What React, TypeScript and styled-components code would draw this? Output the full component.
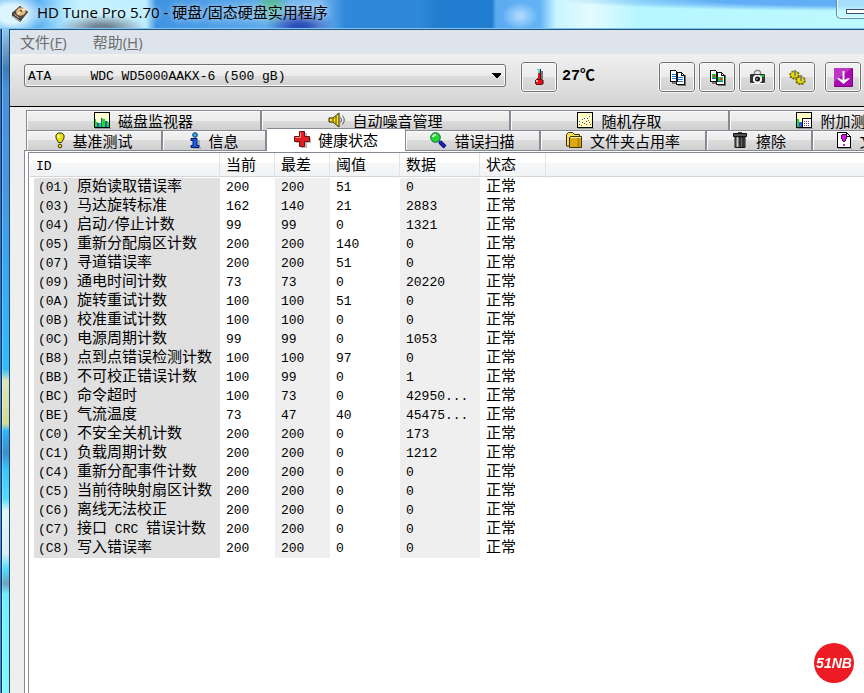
import React from "react";
import styled, { createGlobalStyle, css } from "styled-components";

const CJK = '"Noto Sans CJK SC", sans-serif';
const MONO = '"Liberation Mono", "Noto Sans CJK SC", monospace';

const GlobalStyle = createGlobalStyle`
  * { box-sizing: border-box; }
  html, body { margin: 0; height: 100%; overflow: hidden; background: #fff; }
  button { font: inherit; color: inherit; }
`;

/* ---------- window frame ---------- */

const Window = styled.div`
  display: flex;
  flex-direction: column;
  min-height: 100vh;
  overflow: hidden;
  color: #000;
  font: 13px/19px ${MONO};
`;

const TitleBar = styled.header`
  display: flex;
  align-items: center;
  height: 29px;
  padding-left: 11px;
  border-bottom: 1px solid #7fc4f0;
  background:
    radial-gradient(ellipse 34px 22px at 12px 14px, #e6fbffee 40%, #e6fbff00 100%),
    radial-gradient(ellipse 44px 14px at 102px 28px, #5d6878cc 20%, #5d687800 100%),
    radial-gradient(ellipse 18px 22px at 272px 4px, #4fb98bcc 20%, #4fb98b00 100%),
    radial-gradient(ellipse 34px 20px at 300px 26px, #1733a8cc 20%, #1733a800 100%),
    radial-gradient(ellipse 18px 14px at 520px 16px, #b9e0ffdd 10%, #b9e0ff00 100%),
    radial-gradient(ellipse 300px 11px at 860px 0, #62aef6 50%, #62aef600 100%),
    linear-gradient(90deg, #55abf2 0, #55abf2 36px, #a9e4fd 64px, #c6f2ff 80px, #bdeeff 146px, #3f93e2 156px,
      #5aa8ea 250px, #7dbcf0 318px, #2f88da 345px, #2f88da 418px, #217dcf 440px, #217dcf 492px,
      #5aaaf0 496px, #64b3f5 540px, #c9f5ff 556px, #e3fbff 590px, #b6f6ff 640px, #bdfaff 100%);
`;

const Title = styled.h1`
  flex: 1;
  margin: 0 0 4px 8px;
  font: 400 15px/22px "Open Sans", ${CJK};
  white-space: pre;
  text-shadow: 0 0 6px #ffffff99, 0 0 10px #ffffff66;
`;

const MinimizeButton = styled.button`
  align-self: flex-start;
  display: flex;
  align-items: center;
  justify-content: flex-end;
  width: 28px;
  height: 19px;
  padding: 5px 0 0;
  border: 1px solid #5c93ab;
  border-width: 0 0 1px 1px;
  border-radius: 0 0 0 5px;
  background: #c9f6ffaa;
  box-shadow: inset 1px -1px 0 #e9fdff;
`;

const Body = styled.div`
  flex: 1;
  display: flex;
`;

const LeftFrame = styled.div`
  flex: 0 0 10px;
  border-right: 1px solid #1c4468;
  background:
    linear-gradient(90deg, #0a63c8aa 1px, #0b2f55 1px, #0b2f55 2px, #ffffff55 2px, #ffffff55 3px, transparent 3px),
    linear-gradient(180deg, #8cc9f5 0, #6f9fc8 20px, #3f7db8 40px, #4a90d9 60px, #4796df 160px, #3aa5ef 230px, #2fbdfb 340px,
      #dfe6ba 352px, #d5da96 395px, #2fb4f8 402px, #3c8fc4 424px, #38c6fb 440px, #55dcff 470px,
      #e2f7ff 482px, #d8ecfb 525px, #4fdcff 540px, #6aa4bd 555px, #6ff0ff 565px, #86f8ff 100%);
`;

const Client = styled.main`
  flex: 1;
  min-width: 0;
  display: flex;
  flex-direction: column;
  border-top: 1px solid #23567f;
  background: #efefef;
`;

/* ---------- menu and toolbar ---------- */

const MenuBar = styled.nav`
  display: flex;
  gap: 26px;
  height: 24px;
  padding-left: 10px;
  background: #dde4ec;
`;

const MenuButton = styled.button`
  padding: 0;
  border: 0;
  background: none;
  color: #6d6d6d;
  font: 15px/24px "Open Sans", ${CJK};
`;

const Toolbar = styled.div`
  display: flex;
  align-items: flex-start;
  height: 53px;
  padding: 8px 3px 0 14px;
  border-bottom: 1px solid #000;
  background: linear-gradient(#f1f1f1, #d3d3d3);
`;

const DriveField = styled.label`
  display: grid;
  align-items: center;
  flex: 0 1 482px;
  min-width: 120px;
  margin-top: 2px;
  & > * { grid-area: 1 / 1; }
  & > svg { justify-self: end; margin-right: 5px; pointer-events: none; }
`;

const DriveSelect = styled.select`
  appearance: none;
  width: 100%;
  height: 23px;
  padding: 1px 20px 0 3px;
  border: 1px solid #707070;
  border-radius: 3px;
  background: linear-gradient(#f3f3f3, #ebebeb 50%, #dddddd 50%, #d0d0d0);
  box-shadow: inset 0 0 0 1px #fafafa;
  color: #000;
  font: 13px/19px ${MONO};
`;

const ToolButton = styled.button`
  display: flex;
  align-items: center;
  justify-content: center;
  flex: none;
  width: 36px;
  height: 30px;
  padding: 0;
  border: 1px solid #707070;
  border-radius: 3px;
  outline: 1px solid #f3f3f3;
  background: linear-gradient(#f3f3f3, #ebebeb 50%, #dddddd 50%, #cfcfcf);
  box-shadow: inset 0 0 0 1px #fafafa;
`;

const Temperature = styled.output`
  margin-left: 5px;
  font: 700 15px/30px "Liberation Mono", ${CJK};
`;

const ToolGroup = styled.div`
  display: flex;
  gap: 4px;
  margin-left: auto;
  & > :last-child { margin-left: 6px; }
`;

const ThermoButton = styled(ToolButton)`
  margin-left: 15px;
`;

/* ---------- tabs ---------- */

const TabArea = styled.div`
  flex: 1;
  display: flex;
  flex-direction: column;
  padding: 3px 0 0 14px;
  overflow: hidden;
`;

const TabRow = styled.div`
  display: flex;
  height: 20px;
  margin-left: 2px;
  border-left: 1px solid #858a95;
`;

const Tab = styled.button<{ $width: number; $active?: boolean }>`
  display: flex;
  align-items: center;
  justify-content: center;
  gap: 7px;
  flex: 0 0 ${(p) => p.$width}px;
  height: 20px;
  padding: 0;
  border: 0 solid #858a95;
  border-width: 1px 2px 0 0;
  background: linear-gradient(#f2f2f2, #ebebeb 50%, #dcdcdc 50%, #cfcfcf);
  box-shadow: inset 1px 1px 0 #fbfbfb;
  color: #000;
  font: 15px/18px ${CJK};
  white-space: nowrap;
  & > svg { flex: none; }
  ${(p) =>
    p.$active &&
    css`
      z-index: 1;
      height: 23px;
      margin-top: -2px;
      padding: 0 0 1px;
      border-right-width: 1px;
      background: #fff;
      box-shadow: none;
    `}
`;

const Panel = styled.section`
  flex: 1;
  display: flex;
  padding: 1px 0 0 3px;
  border: solid #858a95;
  border-width: 1px 0 0 1px;
  background: #fff;
`;

const ListView = styled.div`
  flex: 1;
  min-width: 0;
  padding-left: 1px;
  border: solid #858a95;
  border-width: 1px 0 0 1px;
`;

/* ---------- attribute table ---------- */

const Table = styled.table`
  width: 100%;
  border-spacing: 0;
  table-layout: fixed;
`;

const Col = styled.col<{ $width?: number }>`
  width: ${(p) => (p.$width ? `${p.$width}px` : "auto")};
`;

const HeadCell = styled.th`
  height: 25px;
  padding: 2px 0 0 6px;
  border-right: 1px solid #e2e4e8;
  background:
    linear-gradient(transparent 23px, #d5d5d5 23px, #d5d5d5 24px, #fff 24px),
    linear-gradient(#fff 10px, #f6f7f8 10px, #f1f2f4);
  font-weight: 400;
  text-align: left;
  white-space: nowrap;
  &:last-child { border-right: 0; }
`;

const Cell = styled.td<{ $tone?: string }>`
  height: 19px;
  padding: 0 0 0 6px;
  background: ${(p) => p.$tone || "#fff"};
  white-space: nowrap;
`;

const NameCell = styled(Cell)`
  padding-left: 4px;
  border-left: 4px solid #fff;
`;

const Han = styled.span`
  font-family: ${CJK};
  font-size: 15px;
  line-height: 0;
`;

const Badge = styled.div`
  position: fixed;
  right: 10px;
  bottom: 10px;
  display: flex;
  align-items: center;
  justify-content: center;
  width: 40px;
  height: 40px;
  border-radius: 50%;
  background: #ed1c24;
  color: #fff;
  font: italic 700 14px/40px "Liberation Sans", sans-serif;
`;

/* Chinese runs are set larger than the Latin text around them. */
function Mixed({ text }: { text: string }) {
  return (
    <>
      {text.split(/([\u4e00-\u9fff℃]+)/).map((part, i) => (i % 2 ? <Han key={i}>{part}</Han> : part))}
    </>
  );
}

/* ---------- icons ---------- */

function Svg({ w = 17, h = 17, smooth, children }: { w?: number; h?: number; smooth?: boolean; children: React.ReactNode }) {
  return (
    <svg width={w} height={h} viewBox={`0 0 ${w} ${h}`} shapeRendering={smooth ? "auto" : "crispEdges"} aria-hidden="true">
      {children}
    </svg>
  );
}

const DiskIcon = () => (
  <Svg w={18} h={18} smooth>
    <path d="M1 8 9 1l8 6-8 10-8-6z" fill="#3b3430" />
    <path d="M1 8 9 1l8 6-7 8z" fill="#55493f" />
    <ellipse cx="10" cy="6.500" rx="5" ry="4" fill="#e8b878" transform="rotate(-20 10 6.500)" />
    <path d="M10 6 14 4M10 6 7 9" stroke="#fff4dc" strokeWidth="1.500" />
    <circle cx="10" cy="6" r="1.300" fill="#7a6a55" />
    <path d="m3 9 5 4M2 11l7 5" stroke="#b9b9b9" />
  </Svg>
);

const ThermoIcon = () => (
  <Svg w={12} h={18}>
    <path d="M8 3h2v9l1 1v3l-2 1H4v-1h4z" fill="#777" />
    <path d="M4 1h4v10h1v1h1v4H9v1H3v-1H2v-4h1v-1h1z" fill="#7c1018" />
    <path d="M4 1h3v5H4z" fill="#58d4e0" />
    <path d="M5 5h2v6H5zM3 12h6v4H3z" fill="#f00c14" />
    <path d="M4 2h1v8H4z" fill="#d8ffff" />
    <path d="M3 12h2v2H3z" fill="#ffb4b4" />
    <path d="M1 12h1v4H1z" fill="#8ff" />
    <path d="M7 1h1v10H7z" fill="#401418" />
  </Svg>
);

const Pages = ({ picture }: { picture?: boolean }) => (
  <Svg>
    <path d="M3 13h5v2H3zM9 15h8v2H9zM15 6h2v10h-2z" fill="#777" />
    <path d="M1.500 1.500h5l2 2v9h-7zM7.500 3.500h5l3 3v9h-8z" fill="#fff" stroke="#111" />
    <path d="M12.500 3.500v3h3" fill="none" stroke="#111" />
    {picture ? (
      <>
        <path d="M3 5h4v5H3zM9 8h5v5H9z" fill="#16d235" />
        <path d="M3 9h4v1H3zM9 12h5v1H9z" fill="#1264d8" />
        <path d="M4 6h2v2H4zM11 9h2v2h-2z" fill="#f03818" />
      </>
    ) : (
      <path d="M3 5.500h4M3 7.500h4M3 9.500h4M9 8.500h5M9 10.500h5M9 12.500h5" stroke="#1d79dc" />
    )}
  </Svg>
);

const CameraIcon = () => (
  <Svg smooth>
    <path d="M5.500 5V3L7 1.500h3L11.500 3v2" fill="none" stroke="#888" strokeWidth="1.500" />
    <path d="M2 14.500h14" stroke="#fff" />
    <rect x="1" y="5" width="15" height="9" rx="1" fill="#333" />
    <rect x="12" y="6" width="3" height="2" fill="#19c832" />
    <path d="M6 6h5l2 2v4l-2 2H6l-2-2V8z" fill="#f4f4f4" />
    <circle cx="8.500" cy="10" r="2.500" fill="#111" />
    <path d="M7 9h2v2H7z" fill="#777" />
  </Svg>
);

const GearsIcon = () => (
  <Svg smooth>
    <g stroke="#6e6600" fill="#cfc600">
      <ellipse cx="5.500" cy="6" rx="4.200" ry="3.600" strokeDasharray="2 1" strokeWidth="2" />
      <ellipse cx="11.500" cy="11.500" rx="4.200" ry="3.600" strokeDasharray="2 1" strokeWidth="2" />
    </g>
    <ellipse cx="5.500" cy="5.500" rx="3.300" ry="2.600" fill="#e4dc10" />
    <ellipse cx="11.500" cy="11" rx="3.300" ry="2.600" fill="#e4dc10" />
    <path d="M6 1v6M12 6v6" stroke="#8a8a70" strokeWidth="2" />
  </Svg>
);

const DownIcon = () => (
  <Svg w={19} h={19} smooth>
    <rect width="19" height="19" rx="1" fill="#7d0085" />
    <rect width="18" height="18" rx="1" fill="#a80cae" />
    <path d="M0 0h18L0 14z" fill="#bf35c4" />
    <path d="M9.500 3v10" stroke="#fff" strokeWidth="2" />
    <path d="M3 10.500 5 10l3.500 2h2L14 10l2 .5-6.500 5.500z" fill="#fff" />
  </Svg>
);

const MonitorIcon = () => (
  <Svg>
    <path d="M1 16h16V1" fill="none" stroke="#999" />
    <path d="M.5.5h15v15H.5z" fill="#ffffd0" stroke="#000" />
    <path d="M1 7h1v3h2v1h3V6h2v1h2v2h3v1h1v5H1z" fill="#1ce01c" />
    <path d="M3 11h2v4H3zM7 6h1v9H7zM11 9h2v6h-2z" fill="#3652e0" />
  </Svg>
);

const SpeakerIcon = () => (
  <Svg smooth>
    <path d="M1 6h4l6-5v14l-6-5H1z" fill="#f6e61c" stroke="#2a2500" />
    <path d="M5 6v4M8 4v8" stroke="#8a7c00" strokeWidth="1.500" />
    <path d="M12.500 5.500q2 2.500 0 5M14.500 3.500q3.500 4.500 0 9" fill="none" stroke="#555" />
  </Svg>
);

const ScatterIcon = () => (
  <Svg>
    <path d="M1 16h16V1" fill="none" stroke="#999" />
    <path d="M.5.5h15v15H.5z" fill="#ffffc4" stroke="#000" />
    <path d="M2 9h1v1H2zM5 7h1v1H5zM7 6h1v1H7zM10 6h1v1h-1zM12 4h1v1h-1zM9 9h1v1H9zM5 10h1v1H5z" fill="#2440e0" />
    <path d="M2 12h1v1H2zM4 13h1v1H4zM7 11h1v1H7zM9 12h1v1H9zM12 10h1v1h-1zM11 8h1v1h-1zM13 12h1v1h-1z" fill="#e03020" />
  </Svg>
);

const ExtraIcon = () => (
  <Svg>
    <path d="M1 16h16V1" fill="none" stroke="#999" />
    <path d="M.5.5h15v15H.5z" fill="#ffffc4" stroke="#000" />
    <path d="M1 7h2v8H1z" fill="#18d830" />
    <path d="M3 10h3v5H3z" fill="#3652e0" />
    <path d="M6.500 6.500h9v9h-9z" fill="#fff" stroke="#000" />
    <path d="M8 9h1v1H8zM12 9h1v1h-1zM10 11h1v1h-1zM8 13h1v1H8z" fill="#d02090" />
    <path d="M10 9h1v1h-1zM8 11h1v1H8zM12 11h1v1h-1zM12 13h1v1h-1zM10 13h1v1h-1z" fill="#3040d0" />
  </Svg>
);

const BulbIcon = () => (
  <Svg w={10} smooth>
    <path d="M3 1h4l2 2v3L6.500 10.500h-3L1 6V3z" fill="#e8e010" stroke="#383400" />
    <path d="M3.500 3v3" stroke="#fffde0" strokeWidth="1.500" />
    <circle cx="5" cy="14" r="1.800" fill="#e8e010" stroke="#383400" />
  </Svg>
);

const InfoIcon = () => (
  <Svg w={12} smooth>
    <path d="M4 16h8M10 8v7" stroke="#888" />
    <circle cx="6" cy="3" r="2.300" fill="#28b8f4" stroke="#053060" />
    <path d="M2 6.500h6v7h2v2H2v-2h2v-5H2z" fill="#1463f0" stroke="#06165c" />
  </Svg>
);

const CrossIcon = () => (
  <Svg smooth>
    <path d="M7 2h6v5h4v5h-4v5H7v-5H2V7h5z" fill="#00000044" />
    <path d="M5.500.5h5v5h5v5h-5v5h-5v-5h-5v-5h5z" fill="#e21d24" stroke="#6b1116" />
    <path d="M6.500 1.500v5h-5" fill="none" stroke="#ff8a80" />
  </Svg>
);

const LensIcon = () => (
  <Svg smooth>
    <path d="m10 10 5 5" stroke="#000040" strokeWidth="4" />
    <path d="m9 9 6 6" stroke="#1424c8" strokeWidth="2.500" />
    <circle cx="5.500" cy="5.500" r="4.800" fill="#26d636" stroke="#0a6a30" />
    <path d="M3 5q0-2 3-2" fill="none" stroke="#c8ffd0" strokeWidth="2" />
  </Svg>
);

const FolderIcon = () => (
  <Svg smooth>
    <path d="M.5 14V2.500l2-2h4l2 2h5V14z" fill="#f4e060" stroke="#3a3000" />
    <path d="M3.500 15.500v-10l1-1h11v11z" fill="#dba914" stroke="#3a3000" />
    <path d="M5 5.500h10" stroke="#fff0a0" />
    <path d="M12.500 6v9" stroke="#b38300" strokeWidth="2" />
  </Svg>
);

const TrashIcon = () => (
  <Svg smooth>
    <path d="M6 0h4v2H6z" fill="#444" />
    <path d="M1.500 1.500h13v3h-13z" fill="#555" stroke="#111" />
    <path d="M3 5h10v10.500H3z" fill="#666" stroke="#111" />
    <path d="M5.500 5v10" stroke="#ccc" strokeWidth="1.500" />
    <path d="M8 5v10M11 5v10" stroke="#222" strokeWidth="1.500" />
  </Svg>
);

const FileTestIcon = () => (
  <Svg w={15}>
    <path d="M1 16h14V5" fill="none" stroke="#999" />
    <path d="M.5.5h9l4 4v11H.5z" fill="#fff" stroke="#000" />
    <path d="M9.500.5v4h4" fill="none" stroke="#000" />
    <path d="M5 2h4v1h1v4H9v2H8v1H6V9H5V7H4V3h1z" fill="#4a0050" />
    <path d="M5 3h4v4H8v2H6V7H5zM6 12h2v2H6z" fill="#d418dc" />
  </Svg>
);

/* ---------- data ---------- */

type TabInfo = { label: string; width: number; icon: React.ReactNode; active?: boolean };

const upperTabs: TabInfo[] = [
  { label: "磁盘监视器", width: 235, icon: <MonitorIcon /> },
  { label: "自动噪音管理", width: 249, icon: <SpeakerIcon /> },
  { label: "随机存取", width: 219, icon: <ScatterIcon /> },
  { label: "附加测试", width: 219, icon: <ExtraIcon /> },
];

const lowerTabs: TabInfo[] = [
  { label: "基准测试", width: 136, icon: <BulbIcon /> },
  { label: "信息", width: 104, icon: <InfoIcon /> },
  { label: "健康状态", width: 139, icon: <CrossIcon />, active: true },
  { label: "错误扫描", width: 135, icon: <LensIcon /> },
  { label: "文件夹占用率", width: 166, icon: <FolderIcon /> },
  { label: "擦除", width: 106, icon: <TrashIcon /> },
  { label: "文件基准", width: 133, icon: <FileTestIcon /> },
];

const columns: [string, number?][] = [["ID", 190], ["当前", 55], ["最差", 55], ["阈值", 70], ["数据", 80], ["状态", 66], [""]];

const attributes: string[][] = [
  ["(01) 原始读取错误率", "200", "200", "51", "0"],
  ["(03) 马达旋转标准", "162", "140", "21", "2883"],
  ["(04) 启动/停止计数", "99", "99", "0", "1321"],
  ["(05) 重新分配扇区计数", "200", "200", "140", "0"],
  ["(07) 寻道错误率", "200", "200", "51", "0"],
  ["(09) 通电时间计数", "73", "73", "0", "20220"],
  ["(0A) 旋转重试计数", "100", "100", "51", "0"],
  ["(0B) 校准重试计数", "100", "100", "0", "0"],
  ["(0C) 电源周期计数", "99", "99", "0", "1053"],
  ["(B8) 点到点错误检测计数", "100", "100", "97", "0"],
  ["(BB) 不可校正错误计数", "100", "99", "0", "1"],
  ["(BC) 命令超时", "100", "73", "0", "42950..."],
  ["(BE) 气流温度", "73", "47", "40", "45475..."],
  ["(C0) 不安全关机计数", "200", "200", "0", "173"],
  ["(C1) 负载周期计数", "200", "200", "0", "1212"],
  ["(C4) 重新分配事件计数", "200", "200", "0", "0"],
  ["(C5) 当前待映射扇区计数", "200", "200", "0", "0"],
  ["(C6) 离线无法校正", "200", "200", "0", "0"],
  ["(C7) 接口 CRC 错误计数", "200", "200", "0", "0"],
  ["(C8) 写入错误率", "200", "200", "0", "0"],
];

const tones = ["#fff", "#efefef", "#fff", "#efefef"];

function Tabs({ items }: { items: TabInfo[] }) {
  return (
    <TabRow role="tablist">
      {items.map((t) => (
        <Tab key={t.label} type="button" role="tab" aria-selected={!!t.active} $width={t.width} $active={t.active}>
          {t.icon}
          {t.label}
        </Tab>
      ))}
    </TabRow>
  );
}

export default function App() {
  return (
    <Window>
      <GlobalStyle />
      <TitleBar>
        <DiskIcon />
        <Title>HD Tune Pro 5.70 - 硬盘/固态硬盘实用程序</Title>
        <MinimizeButton type="button" aria-label="最小化">
          <Svg w={18} h={5}>
            <path d="M.5.5H20v4H.5z" fill="#fff" stroke="#44506a" />
          </Svg>
        </MinimizeButton>
      </TitleBar>
      <Body>
        <LeftFrame />
        <Client>
          <MenuBar>
            <MenuButton type="button">文件(<u>F</u>)</MenuButton>
            <MenuButton type="button">帮助(<u>H</u>)</MenuButton>
          </MenuBar>
          <Toolbar>
            <DriveField>
              <DriveSelect aria-label="驱动器">
                <option>{"ATA\u00a0\u00a0\u00a0\u00a0\u00a0WDC WD5000AAKX-6 (500 gB)"}</option>
              </DriveSelect>
              <Svg w={9} h={5}>
                <path d="M0 0h9v1L5 5H4L0 1z" fill="#000" />
              </Svg>
            </DriveField>
            <ThermoButton type="button" aria-label="温度"><ThermoIcon /></ThermoButton>
            <Temperature><Mixed text="27℃" /></Temperature>
            <ToolGroup>
              <ToolButton type="button" aria-label="复制文本"><Pages /></ToolButton>
              <ToolButton type="button" aria-label="复制图像"><Pages picture /></ToolButton>
              <ToolButton type="button" aria-label="屏幕截图"><CameraIcon /></ToolButton>
              <ToolButton type="button" aria-label="选项"><GearsIcon /></ToolButton>
              <ToolButton type="button" aria-label="保存"><DownIcon /></ToolButton>
            </ToolGroup>
          </Toolbar>
          <TabArea>
            <Tabs items={upperTabs} />
            <Tabs items={lowerTabs} />
            <Panel role="tabpanel" aria-label="健康状态">
              <ListView>
                <Table>
                  <colgroup>
                    {columns.map(([name, width]) => <Col key={name} $width={width} />)}
                  </colgroup>
                  <thead>
                    <tr>
                      {columns.map(([name]) => (
                        <HeadCell key={name} scope="col"><Mixed text={name} /></HeadCell>
                      ))}
                    </tr>
                  </thead>
                  <tbody>
                    {attributes.map(([name, ...values]) => (
                      <tr key={name}>
                        <NameCell $tone="#e0e0e0"><Mixed text={name} /></NameCell>
                        {values.map((v, i) => <Cell key={i} $tone={tones[i]}>{v}</Cell>)}
                        <Cell><Mixed text="正常" /></Cell>
                        <Cell />
                      </tr>
                    ))}
                  </tbody>
                </Table>
              </ListView>
            </Panel>
          </TabArea>
        </Client>
      </Body>
      <Badge>51NB</Badge>
    </Window>
  );
}
